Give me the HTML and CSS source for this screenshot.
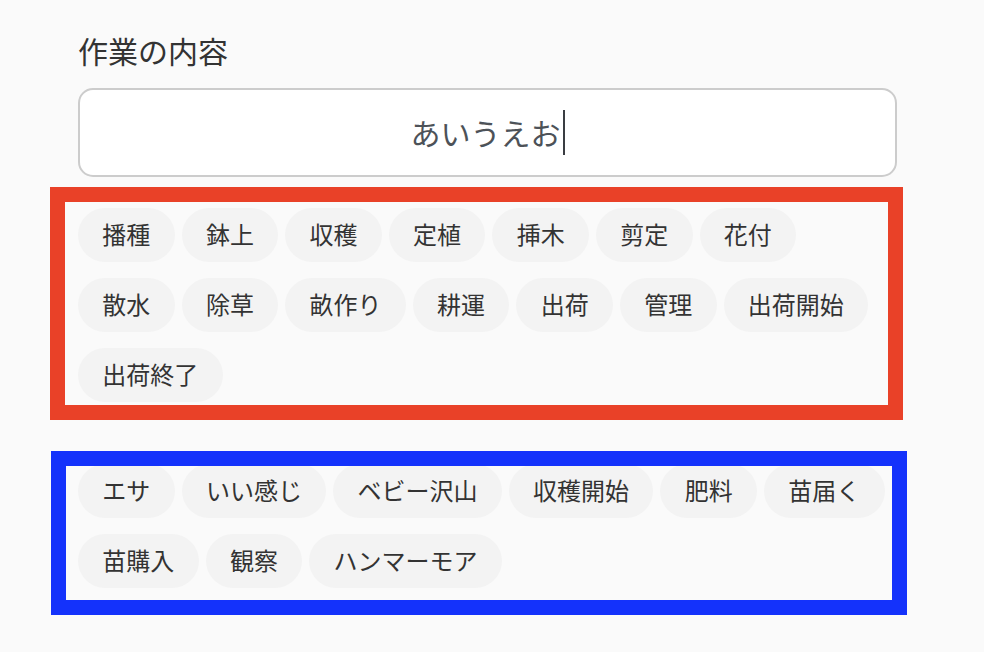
FILE: index.html
```html
<!DOCTYPE html>
<html lang="ja">
<head>
<meta charset="utf-8">
<title>作業の内容</title>
<link rel="stylesheet" href="styles.css">
</head>
<body>
<div class="page">
  <div class="field">
    <div class="label">作業の内容</div>
    <div class="input"><span class="input-text">あいうえお</span><span class="caret"></span></div>
  </div>
  <div class="box box-red">
    <div class="chips">
      <span class="chip">播種</span>
      <span class="chip">鉢上</span>
      <span class="chip">収穫</span>
      <span class="chip">定植</span>
      <span class="chip">挿木</span>
      <span class="chip">剪定</span>
      <span class="chip">花付</span>
      <span class="chip">散水</span>
      <span class="chip">除草</span>
      <span class="chip">畝作り</span>
      <span class="chip">耕運</span>
      <span class="chip">出荷</span>
      <span class="chip">管理</span>
      <span class="chip">出荷開始</span>
      <span class="chip">出荷終了</span>
    </div>
  </div>
  <div class="box box-blue">
    <div class="chips chips-scrolled">
      <span class="chip">エサ</span>
      <span class="chip">いい感じ</span>
      <span class="chip">ベビー沢山</span>
      <span class="chip">収穫開始</span>
      <span class="chip">肥料</span>
      <span class="chip">苗届く</span>
      <span class="chip">苗購入</span>
      <span class="chip">観察</span>
      <span class="chip">ハンマーモア</span>
    </div>
  </div>
</div>
</body>
</html>
```

FILE: styles.css
```css
* { box-sizing: border-box; }

html, body {
  margin: 0;
  padding: 0;
  background: #fafafa;
}

body {
  font-family: "Noto Sans CJK JP", "Noto Sans", sans-serif;
  color: #333333;
}

.page {
  padding: 35px 0 0 50px;
}

.field {
  margin-left: 28px;
  width: 819px;
}

.label {
  font-size: 30px;
  line-height: 30px;
  height: 30px;
  color: #333333;
}

.input {
  margin-top: 23px;
  height: 89px;
  border: 2px solid #cccccc;
  border-radius: 15px;
  background: #ffffff;
  display: flex;
  align-items: center;
  justify-content: center;
}

.input-text {
  font-size: 30px;
  line-height: 45px;
  color: #4d5258;
}

.caret {
  display: inline-block;
  width: 2px;
  height: 45px;
  margin-left: 2px;
  background: #3a3d42;
}

.box {
  border-style: solid;
  border-width: 15px;
  background: #fafafa;
  overflow: hidden;
}

.box-red {
  margin-top: 10px;
  width: 853px;
  height: 233px;
  border-color: #e94128;
  padding: 6px 0 0 13px;
}

.box-blue {
  margin-top: 31px;
  margin-left: 1px;
  width: 856px;
  height: 164px;
  border-color: #1432fb;
  padding: 0 0 0 12px;
}

.chips {
  display: flex;
  flex-wrap: wrap;
  gap: 16px 7px;
}

.chips-scrolled {
  margin-top: -2px;
}

.chip {
  height: 54px;
  padding: 0 24.3px 2px;
  border-radius: 27px;
  background: #f3f3f3;
  font-size: 24px;
  line-height: 52px;
  color: #333333;
  white-space: nowrap;
}
```
